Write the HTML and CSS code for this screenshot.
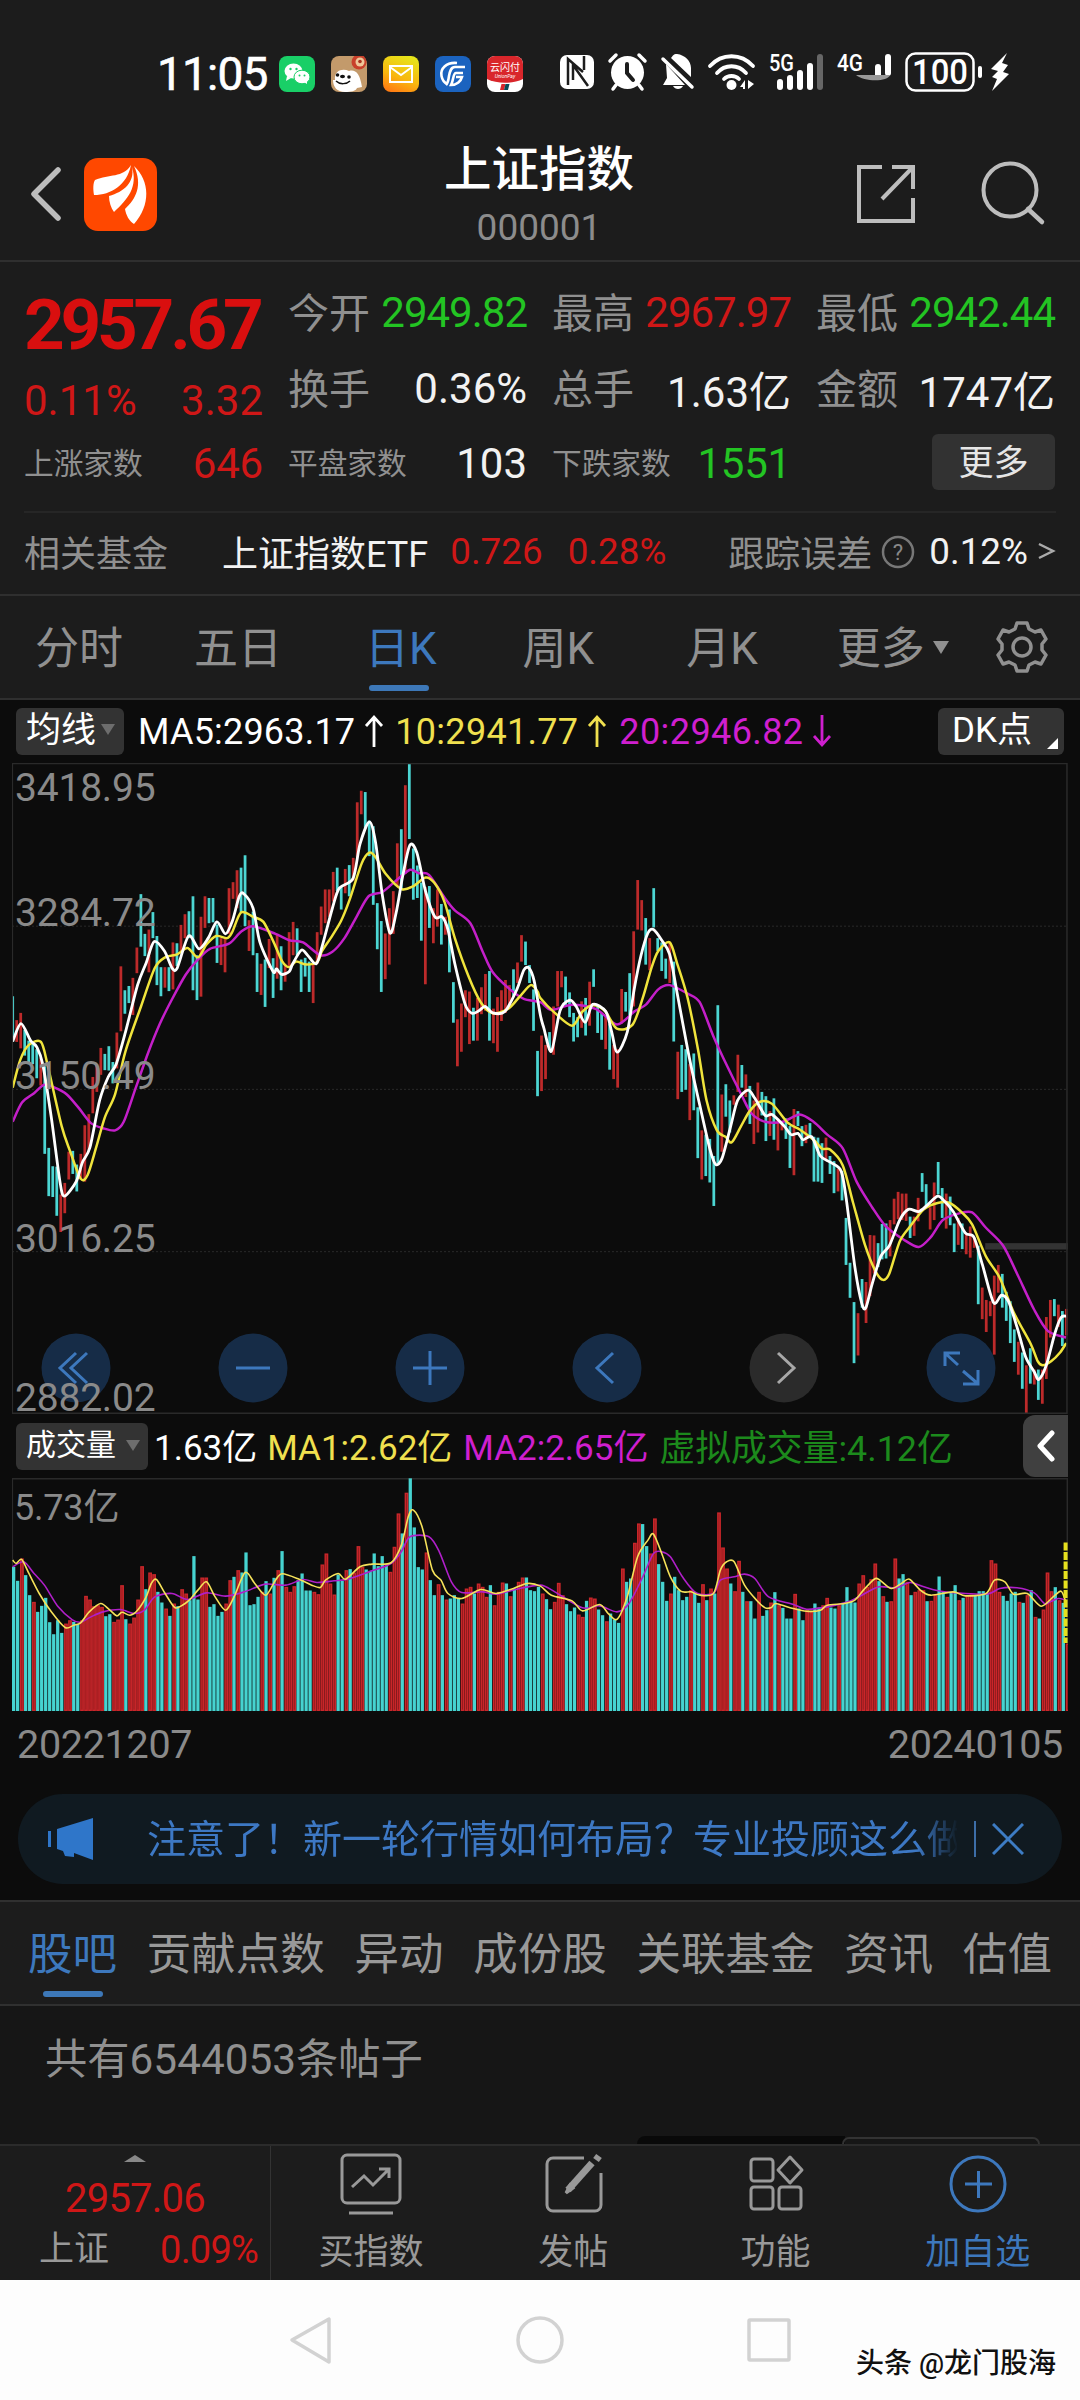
FILE: index.html
```html
<!DOCTYPE html>
<html lang="zh">
<head>
    <meta charset="UTF-8">
    <meta name="viewport" content="width=device-width, initial-scale=1.0">
    <title>上证指数 000001</title>
    <link rel="stylesheet" href="styles.css">
</head>
<body>
    <!-- 状态栏 -->
    <div class="status-bar">
        <span class="time">11:05</span>
        <div class="app-icons">
            <svg viewBox="0 0 36 36"><rect width="36" height="36" rx="8" fill="#19cf67"/><ellipse cx="14.5" cy="15" rx="9" ry="7.5" fill="#fff"/><path d="M8 20l-1 5 5-3z" fill="#fff"/><ellipse cx="23" cy="21" rx="8" ry="6.8" fill="#fff" stroke="#19cf67" stroke-width="1"/><path d="M25 26l3 2v-4z" fill="#fff"/><g fill="#19cf67"><circle cx="11.5" cy="13" r="1.2"/><circle cx="17.5" cy="13" r="1.2"/><circle cx="20.5" cy="19.5" r="1"/><circle cx="25.5" cy="19.5" r="1"/></g></svg>
            <svg viewBox="0 0 36 36"><rect width="36" height="36" rx="8" fill="#c39a6b"/><circle cx="28" cy="6" r="7.5" fill="#c8402b"/><circle cx="29" cy="6" r="4.5" fill="#eec79a"/><circle cx="29" cy="5.5" r="1.8" fill="#a8321f"/><path d="M4 24C3 14 12 12 18 15c6-2 11 2 13 16l-5 1c-1 3-6 4-12 4C6 36 2 31 2 24z" fill="#fff"/><circle cx="6.5" cy="19" r="1.8" fill="#111"/><circle cx="18" cy="21" r="1.8" fill="#111"/><ellipse cx="11.5" cy="20.5" rx="2.5" ry="1.8" fill="#111"/><path d="M5 25c4 4 11 3 14 0" fill="none" stroke="#111" stroke-width="1.5"/></svg>
            <svg viewBox="0 0 36 36"><defs><linearGradient id="mail" x1="0.7" y1="0" x2="0.3" y2="1"><stop offset="0" stop-color="#e6e51a"/><stop offset="0.6" stop-color="#f9b70f"/><stop offset="1" stop-color="#ff7d12"/></linearGradient></defs><rect width="36" height="36" rx="8" fill="url(#mail)"/><path d="M7 10h22v16H7zM7 11l11 8 11-8" fill="none" stroke="#fff" stroke-width="2"/></svg>
            <svg viewBox="0 0 36 36"><rect width="36" height="36" rx="8" fill="#1b63bf"/><g fill="none" stroke="#fff" stroke-width="2.6"><path d="M22 7C11 6 5 13 6.5 20c1 5 3 7 6 8"/><path d="M30 11H20c-4 0-5 4-6 9-.5 4-1 7-3 9"/><path d="M28 17h-7c-3 0-2 6-5 12 6 0 10-4 11-8h-6"/></g></svg>
            <svg viewBox="0 0 36 36"><rect width="36" height="36" rx="8" fill="#fff"/><path d="M0 23V8a8 8 0 018-8h20a8 8 0 018 8v15c-10 5-26 5-36 0z" fill="#d9262b"/><path d="M14.5 28h4l-1.5 6h-4z" fill="#d9262b"/><path d="M18.5 28h4l-1.5 6h-4z" fill="#0b4b57"/><text x="18" y="15" class="pay-text">云闪付</text><text x="18" y="22" class="pay-sub">UnionPay</text></svg>
        </div>
        <svg class="signals" viewBox="0 0 470 60">
            <g fill="#fff">
                <rect x="10" y="11" width="34" height="34" rx="7"/>
                <path d="M18 41V15l15 13M23 36V21l15 21M34 26V12" fill="none" stroke="#1c1c1c" stroke-width="2.5"/>
                <circle cx="77.5" cy="28.5" r="16.5"/>
                <path d="M60 17l6-6M95 17l-6-6M66 41l-3 4M89 41l3 4" stroke="#fff" stroke-width="3.5" stroke-linecap="round"/>
                <path d="M77 20v9l6 7" fill="none" stroke="#1c1c1c" stroke-width="4" stroke-linecap="round"/>
                <path d="M127 10c8 1 14 7 14 14v9L121 14c2-2 2-4 6-4zM116 20l19 21h-22l4-7zM123 42h10c-2 4-8 4-10 0z"/>
                <path d="M113 15l29 28" stroke="#fff" stroke-width="3.5" stroke-linecap="round"/>
                <circle cx="181.5" cy="41" r="5"/>
                <g fill="none" stroke="#fff" stroke-width="3.8" stroke-linecap="round"><path d="M160 22c12-13 31-13 43 0M167 29c8-9 21-9 29 0M174 35c4-4 11-4 15 0"/></g>
                <path d="M190 43l5-7v9h-2v-2zM198 36v9l6-5z"/>
                <rect x="227" y="35" width="6" height="11" rx="3"/>
                <rect x="237" y="31" width="6" height="15" rx="3"/>
                <rect x="247" y="26" width="6" height="20" rx="3"/>
                <rect x="257" y="19" width="6" height="27" rx="3"/>
                <rect x="267" y="10" width="6" height="36" rx="3" fill="#666"/>
                <rect x="325" y="20" width="6" height="14" rx="3"/>
                <rect x="335" y="10" width="6" height="22" rx="3"/>
                <path d="M306 31h34c-2 7-26 7-34 0z" fill="#999"/>
                <rect x="356.5" y="9.5" width="67" height="37" rx="9" fill="none" stroke="#fff" stroke-width="2.5"/>
                <rect x="428" y="22" width="4" height="12" rx="2"/>
                <path d="M457 9l-16 16 7 2-6 6 5 2-5 12 17-17-6-2 5-7-6-2z"/>
            </g>
            <text x="219" y="27" class="net" textLength="25" lengthAdjust="spacingAndGlyphs">5G</text>
            <text x="287" y="27" class="net" textLength="26" lengthAdjust="spacingAndGlyphs">4G</text>
            <text x="390" y="40" class="battery" textLength="56" lengthAdjust="spacingAndGlyphs">100</text>
        </svg>
    </div>

    <!-- 标题 -->
    <div class="header">
        <svg class="back" viewBox="0 0 32 56"><path d="M28 4L4 28l24 24" fill="none" stroke="#bdbdbd" stroke-width="5.5" stroke-linecap="round" stroke-linejoin="round"/></svg>
        <svg class="logo" viewBox="0 0 73 73"><rect width="73" height="73" rx="14" fill="#ff4800"/><g fill="#fff"><path d="M47 7C39 20 25 16 11 22c-2 3-2 9-1 15C27 37 43 27 47 7z"/><path d="M48 9c3 15-8 25-23 29 0 6 2 12 5 16C44 41 54 29 48 9z"/><path d="M50 8c9 19 2 33-9 43 1 6 4 12 9 15 17-19 16-43 0-58z"/></g></svg>
        <div class="title">
            <div class="name">上证指数</div>
            <div class="code">000001</div>
        </div>
        <svg class="share" viewBox="0 0 60 60"><path d="M26 3H3v54h54V34M36 3h21v22M57 3L26 35" fill="none" stroke="#bdbdbd" stroke-width="4"/></svg>
        <svg class="search" viewBox="0 0 66 66"><circle cx="30" cy="29" r="26.5" fill="none" stroke="#bdbdbd" stroke-width="4"/><path d="M48 48l14 13" stroke="#bdbdbd" stroke-width="4.5" stroke-linecap="round"/></svg>
    </div>

    <!-- 行情 -->
    <div class="quote">
        <div class="col first">
            <div class="price red">2957.67</div>
            <div class="row change red"><span>0.11%</span><span>3.32</span></div>
            <div class="row small"><label>上涨家数</label><span class="red">646</span></div>
        </div>
        <div class="col">
            <div class="row"><label>今开</label><span class="green">2949.82</span></div>
            <div class="row"><label>换手</label><span>0.36%</span></div>
            <div class="row small"><label>平盘家数</label><span>103</span></div>
        </div>
        <div class="col">
            <div class="row"><label>最高</label><span class="red">2967.97</span></div>
            <div class="row"><label>总手</label><span>1.63亿</span></div>
            <div class="row small"><label>下跌家数</label><span class="green">1551</span></div>
        </div>
        <div class="col">
            <div class="row"><label>最低</label><span class="green">2942.44</span></div>
            <div class="row"><label>金额</label><span>1747亿</span></div>
            <div class="row more"><button class="more-btn">更多</button></div>
        </div>
    </div>
    <div class="fund">
        <span class="gray">相关基金</span>
        <span class="etf">上证指数ETF</span>
        <span class="red nav">0.726</span>
        <span class="red rate">0.28%</span>
        <span class="gray track">跟踪误差</span>
        <svg class="help" viewBox="0 0 34 34"><circle cx="17" cy="17" r="15" fill="none" stroke="#777" stroke-width="2.5"/><text x="17" y="25">?</text></svg>
        <span class="err">0.12%</span>
        <svg class="arrow" viewBox="0 0 18 22"><path d="M1 4l14 7-14 7" fill="none" stroke="#aaa" stroke-width="2.5"/></svg>
    </div>

    <!-- 周期切换 -->
    <div class="tabs">
        <span class="tab first-tab">分时</span>
        <span class="tab">五日</span>
        <span class="tab active">日K</span>
        <span class="tab">周K</span>
        <span class="tab month">月K</span>
        <span class="tab others">更多<i class="down"></i></span>
        <svg class="gear" viewBox="0 0 54 54"><path d="M22 3h10l2 6 6 3 6-2 5 9-4 5v6l4 5-5 9-6-2-6 3-2 6H22l-2-6-6-3-6 2-5-9 4-5v-6l-4-5 5-9 6 2 6-3z" fill="none" stroke="#909090" stroke-width="3.5" stroke-linejoin="round"/><circle cx="27" cy="27" r="9" fill="none" stroke="#909090" stroke-width="3.5"/></svg>
    </div>

    <!-- K线 -->
    <div class="chart-area">
        <div class="legend">
            <span class="pill">均线<i class="down dim"></i></span>
            <span class="ma5">MA5:2963.17<svg class="dir" viewBox="0 0 20 34"><path d="M10 33V3M2 12l8-9 8 9" fill="none" stroke="currentColor" stroke-width="2.8"/></svg></span>
            <span class="ma10">10:2941.77<svg class="dir" viewBox="0 0 20 34"><path d="M10 33V3M2 12l8-9 8 9" fill="none" stroke="currentColor" stroke-width="2.8"/></svg></span>
            <span class="ma20">20:2946.82<svg class="dir" viewBox="0 0 20 34"><path d="M10 1v30M2 22l8 9 8-9" fill="none" stroke="currentColor" stroke-width="2.8"/></svg></span>
            <span class="pill dk">DK点<i class="corner"></i></span>
        </div>
        <div class="kline">
            <svg id="kline" viewBox="36 30 3062 1524" preserveAspectRatio="none"></svg>
            <div class="tools">
                <svg viewBox="0 0 70 70"><circle cx="35" cy="35" r="34.5"/><path d="M35 20L19 35l16 15M46 20L30 35l16 15"/></svg>
                <svg viewBox="0 0 70 70"><circle cx="35" cy="35" r="34.5"/><path d="M18 35h34"/></svg>
                <svg viewBox="0 0 70 70"><circle cx="35" cy="35" r="34.5"/><path d="M18 35h34M35 18v34"/></svg>
                <svg viewBox="0 0 70 70"><circle cx="35" cy="35" r="34.5"/><path d="M41 20L25 35l16 15"/></svg>
                <svg class="off" viewBox="0 0 70 70"><circle cx="35" cy="35" r="34.5"/><path d="M29 20l16 15-16 15"/></svg>
                <svg viewBox="0 0 70 70"><circle cx="35" cy="35" r="34.5"/><path d="M19 33V20h15M20 21l12 11M52 37v14H37M51 50L37 38"/></svg>
            </div>
            <span class="scale s1">3418.95</span>
            <span class="scale s2">3284.72</span>
            <span class="scale s3">3150.49</span>
            <span class="scale s4">3016.25</span>
            <span class="scale s5">2882.02</span>
        </div>
        <div class="legend vol-legend">
            <span class="pill">成交量<i class="down dim"></i></span>
            <span class="v0">1.63亿</span>
            <span class="v1">MA1:2.62亿</span>
            <span class="v2">MA2:2.65亿</span>
            <span class="v3">虚拟成交量:4.12亿</span>
            <span class="side"><svg viewBox="0 0 20 32"><path d="M16 3L4 16l12 13" fill="none" stroke="#fff" stroke-width="5" stroke-linecap="round" stroke-linejoin="round"/></svg></span>
        </div>
        <div class="volume">
            <svg id="volume" viewBox="36 204 3062 698" preserveAspectRatio="none"></svg>
            <span class="scale v-scale">5.73亿</span>
        </div>
        <div class="dates"><span>20221207</span><span>20240105</span></div>
        <div class="notice">
            <svg class="horn" viewBox="0 0 46 42"><path d="M1.5 13v16" stroke="#2f76c9" stroke-width="3"/><path d="M9 11L45 0v42l-19-7v4l-9-1-2-5-6-2z" fill="#2f76c9"/></svg>
            <div class="notice-text">注意了！新一轮行情如何布局？专业投顾这么做</div>
            <i class="bar"></i>
            <svg class="close" viewBox="0 0 32 32"><path d="M1 1l30 30M31 1L1 31" stroke="#3d7cc4" stroke-width="3"/></svg>
        </div>
    </div>

    <!-- 资讯栏 -->
    <div class="sections">
        <span class="active">股吧</span>
        <span>贡献点数</span>
        <span>异动</span>
        <span>成份股</span>
        <span>关联基金</span>
        <span>资讯</span>
        <span>估值</span>
    </div>
    <div class="posts">
        共有6544053条帖子
        <div class="switch"><i></i></div>
    </div>

    <!-- 底部 -->
    <div class="bottom-bar">
        <div class="index">
            <i class="up"></i>
            <div class="red num">2957.06</div>
            <div class="index-row"><span>上证</span><span class="red">0.09%</span></div>
        </div>
        <div class="action">
            <svg viewBox="0 0 62 62"><rect x="2" y="2" width="58" height="48" rx="5"/><path d="M12 34l12-11 9 9 15-15M39 16h10v9M9 60h44"/></svg>
            <span>买指数</span>
        </div>
        <div class="action">
            <svg viewBox="0 0 62 62"><path d="M42 5H11a6 6 0 00-6 6v41a6 6 0 006 6h42a6 6 0 006-6V20"/><path d="M26 37L50 10" stroke-width="7"/><path d="M24 40l4-8 3 3z" fill="#999"/><path d="M54 7l3-4" stroke-width="7"/></svg>
            <span>发帖</span>
        </div>
        <div class="action">
            <svg viewBox="0 0 62 62"><rect x="6" y="6" width="22" height="22" rx="3"/><rect x="6" y="34" width="22" height="22" rx="3"/><rect x="34" y="34" width="22" height="22" rx="3"/><path d="M45 4l12 13-12 13-12-13z" stroke-linejoin="round"/></svg>
            <span>功能</span>
        </div>
        <div class="action blue">
            <svg viewBox="0 0 62 62"><circle cx="31" cy="31" r="27"/><path d="M18 31h27M31.5 18v27"/></svg>
            <span>加自选</span>
        </div>
    </div>
    <div class="nav-bar">
        <svg viewBox="0 0 50 50"><path d="M43 4v43L6 25z" stroke-linejoin="round"/></svg>
        <svg viewBox="0 0 50 50"><circle cx="25" cy="25" r="22"/></svg>
        <svg viewBox="0 0 50 50"><rect x="5" y="5" width="40" height="40" rx="1"/></svg>
        <span class="watermark">头条 @龙门股海</span>
    </div>
    <script src="script.js"></script>
</body>
</html>
```

FILE: styles.css
```css
html, body {
    margin: 0;
    padding: 0;
    overflow: hidden;
}

body {
    width: 1080px;
    height: 2400px;
    display: flex;
    flex-direction: column;
    background: #1c1c1c;
    color: #f2f2f2;
    font-family: Roboto, "Noto Sans CJK SC", sans-serif;
}

* {
    box-sizing: border-box;
}

svg {
    display: block;
    flex: none;
}

span, label, .title, .price {
    white-space: nowrap;
}

.red {
    color: #cf1717;
}

.green {
    color: #23c423;
}

.gray {
    color: #909090;
}

/* 状态栏 */
.status-bar {
    height: 148px;
    padding-left: 157px;
    display: flex;
    align-items: center;
    flex: none;
}

.time {
    width: 122px;
    font-size: 46px;
    letter-spacing: -0.8px;
    color: #fff;
    -webkit-text-stroke: 0.6px #fff;
}

.app-icons {
    display: flex;
    gap: 16px;
    width: 271px;
}

.app-icons svg {
    width: 36px;
    height: 36px;
}

.pay-text {
    font-size: 10px;
    fill: #fff;
    text-anchor: middle;
}

.pay-sub {
    font-size: 5px;
    font-style: italic;
    fill: #fff;
    text-anchor: middle;
}

.signals {
    width: 470px;
    height: 60px;
}

.net {
    font-size: 24px;
    font-weight: 500;
    fill: #fff;
}

.battery {
    font-size: 35px;
    font-weight: 500;
    fill: #fff;
    text-anchor: middle;
}

/* 标题 */
.header {
    height: 114px;
    border-bottom: 2px solid #2f2f2f;
    display: flex;
    align-items: center;
    padding: 0 34px 20px 30px;
    flex: none;
}

.back {
    width: 32px;
    height: 56px;
    margin-right: 22px;
}

.logo {
    width: 73px;
    height: 73px;
}

.title {
    flex: 1;
    padding: 12px 0 0 65px;
    text-align: center;
}

.name {
    font-size: 47.5px;
    line-height: 56px;
    font-weight: 500;
    color: #fff;
}

.code {
    font-size: 37px;
    line-height: 60px;
    color: #8c8c8c;
}

.share {
    width: 60px;
    height: 60px;
    margin-right: 64px;
}

.search {
    width: 66px;
    height: 66px;
}

/* 行情 */
.quote {
    height: 251px;
    margin: 0 24px;
    padding-top: 12px;
    border-bottom: 2px solid #262626;
    display: grid;
    grid-template-columns: repeat(4, 239px);
    column-gap: 25px;
    flex: none;
}

.row {
    height: 76px;
    display: flex;
    align-items: center;
    justify-content: space-between;
    font-size: 42px;
}

.row label {
    padding-bottom: 4px;
    font-size: 41px;
    color: #909090;
}

.row .red, .row .green {
    letter-spacing: -1px;
}

.price {
    height: 100px;
    line-height: 102px;
    font-size: 71px;
    font-weight: 700;
    letter-spacing: -4.2px;
    color: #d90f0f;
}

.row.change {
    height: 52px;
}

.row.small {
    height: 74px;
}

.row.small label {
    font-size: 29.7px;
}

.row.small .red, .row.small .green {
    letter-spacing: -0.2px;
}

.row.more {
    height: 72px;
    justify-content: flex-end;
}

.more-btn {
    width: 123px;
    height: 56px;
    padding: 0 0 8px;
    border: none;
    border-radius: 6px;
    background: #323232;
    color: #e6e6e6;
    font: 35px Roboto, "Noto Sans CJK SC", sans-serif;
}

.fund {
    height: 83px;
    padding: 0 24px 6px;
    border-bottom: 2px solid #2f2f2f;
    display: flex;
    align-items: center;
    font-size: 36px;
    flex: none;
}

.etf {
    margin-left: 54px;
}

.fund .nav {
    margin: 0 25px 0 22px;
}

.nav, .rate, .err {
    font-size: 36.8px;
    padding-top: 2px;
}

.track {
    margin-left: auto;
}

.help {
    width: 34px;
    height: 34px;
    margin: 2px 14px 0 9px;
}

.help text {
    font-size: 22px;
    fill: #888;
    text-anchor: middle;
}

.arrow {
    width: 18px;
    height: 22px;
    margin-left: 10px;
}

/* 周期切换 */
.tabs {
    height: 104px;
    border-bottom: 2px solid #2f2f2f;
    padding: 0 31px 0 35px;
    display: flex;
    align-items: center;
    gap: 86px;
    font-size: 44px;
    color: #909090;
    flex: none;
}

.tab {
    height: 102px;
    line-height: 106px;
}

.first-tab {
    margin-right: -15px;
}

.tabs .active {
    margin-left: -3px;
}

.month {
    margin-left: 6px;
}

.others {
    margin: 0 -60px 0 -7px;
}

.active {
    color: #3d78bd;
    position: relative;
}

.active::after {
    content: "";
    position: absolute;
    left: 50%;
    bottom: 7px;
    width: 60px;
    height: 6px;
    margin-left: -32px;
    border-radius: 3px;
    background: #3d78b8;
}

.down {
    display: inline-block;
    border: 8px solid transparent;
    border-top: 13px solid #909090;
    border-bottom: none;
    margin-left: 8px;
    vertical-align: 10px;
}

.down.dim {
    border-width: 11px 7px 0;
    border-top-color: #6d6d6d;
    margin-left: 5px;
    vertical-align: 7px;
}

.gear {
    width: 54px;
    height: 54px;
    margin-left: auto;
}

/* K线 */
.chart-area {
    height: 1200px;
    background: #0c0c0c;
    padding: 0 12px;
    flex: none;
}

.legend {
    height: 63px;
    display: flex;
    align-items: center;
    padding-left: 4px;
    font-size: 36px;
}

.pill {
    width: 108px;
    height: 47px;
    line-height: 46px;
    padding-left: 10px;
    border-radius: 6px;
    background: #333;
    color: #fff;
    font-size: 35px;
}

.ma5 {
    margin-left: 14px;
    color: #fff;
    letter-spacing: 0.2px;
}

.ma10 {
    margin-left: 11px;
    color: #f0e04f;
    letter-spacing: 0.3px;
}

.ma20 {
    margin-left: 12px;
    color: #cf1fcf;
    letter-spacing: 0.4px;
}

.dir {
    display: inline-block;
    width: 20px;
    height: 34px;
    margin-left: 9px;
    vertical-align: -4px;
}

.dk {
    position: relative;
    width: 126px;
    margin-left: auto;
    margin-right: 4px;
    padding-left: 14px;
}

.corner {
    position: absolute;
    right: 6px;
    bottom: 6px;
    border-left: 11px solid transparent;
    border-bottom: 11px solid #fff;
}

.kline {
    position: relative;
    height: 651px;
}

.kline > svg, .volume > svg {
    width: 1056px;
    height: 100%;
}

.scale {
    position: absolute;
    left: 3px;
    font-size: 39px;
    line-height: 40px;
    letter-spacing: -0.2px;
    color: #8a8a8a;
}

.s1 { top: 5px; }
.s2 { top: 130px; }
.s3 { top: 293px; }
.s4 { top: 456px; }
.s5 { top: 615px; }

.tools {
    position: absolute;
    left: 29px;
    top: 570px;
    width: 955px;
    display: flex;
    justify-content: space-between;
}

.tools svg {
    width: 70px;
    height: 70px;
    fill: none;
    stroke: #3d78bd;
    stroke-width: 3;
}

.tools circle {
    fill: rgba(30, 66, 112, 0.6);
    stroke: none;
}

.tools .off {
    stroke: #a8a8a8;
}

.tools .off circle {
    fill: #2b2b2b;
}

.vol-legend {
    height: 64px;
    font-size: 35px;
}

.vol-legend > span {
    margin-bottom: 3px;
}

.vol-legend .pill {
    width: 132px;
    margin-bottom: 0;
    font-size: 30px;
    line-height: 44px;
}

.vol-legend .down {
    margin-left: 10px;
    vertical-align: 4px;
}

.v0 {
    margin-left: 6px;
    color: #fff;
}

.v1 {
    margin-left: 10px;
    color: #f0e04f;
}

.v2 {
    margin-left: 11px;
    color: #cf1fcf;
}

.v3 {
    margin-left: 11px;
    font-size: 35.8px;
    color: #1c8a1c;
}

.vol-legend .side {
    width: 45px;
    height: 62px;
    margin-left: auto;
    margin-bottom: 0;
    border-radius: 12px 0 0 12px;
    background: #404040;
    display: flex;
    align-items: center;
    justify-content: center;
}

.side svg {
    width: 20px;
    height: 32px;
}

.volume {
    position: relative;
    height: 233px;
}

.v-scale {
    left: 2px;
    top: 10px;
    font-size: 36px;
}

.dates {
    height: 83px;
    padding: 0 5px 17px 5px;
    display: flex;
    align-items: center;
    justify-content: space-between;
    font-size: 39.5px;
    color: #8a8a8a;
    letter-spacing: -0.3px;
}

.notice {
    height: 90px;
    margin: 0 6px;
    padding: 0 38px 0 30px;
    border-radius: 45px;
    background: #101a21;
    display: flex;
    align-items: center;
}

.horn {
    width: 46px;
    height: 42px;
}

.notice-text {
    width: 810px;
    margin-left: 53px;
    padding-bottom: 7px;
    overflow: hidden;
    white-space: nowrap;
    font-size: 39px;
    color: #3d78c4;
    -webkit-mask-image: linear-gradient(to right, #000 770px, transparent 812px);
    mask-image: linear-gradient(to right, #000 770px, transparent 812px);
}

.bar {
    width: 2px;
    height: 36px;
    margin: 0 16px 0 17px;
    background: #3d6ea8;
}

.close {
    width: 32px;
    height: 32px;
}

/* 资讯栏 */
.sections {
    height: 106px;
    border-top: 2px solid #303030;
    border-bottom: 2px solid #303030;
    padding: 0 28px;
    display: flex;
    justify-content: space-between;
    font-size: 44.5px;
    line-height: 107px;
    color: #999;
    flex: none;
}

.sections .active {
    height: 102px;
}

.sections .active::after {
    margin-left: -30px;
    bottom: 7px;
}

.posts {
    position: relative;
    height: 138px;
    padding-left: 45px;
    background: #161616;
    font-size: 42.3px;
    line-height: 108px;
    color: #909090;
    flex: none;
}

.switch {
    position: absolute;
    left: 637px;
    bottom: 0;
    width: 403px;
    height: 8px;
    border-radius: 8px 8px 0 0;
    background: linear-gradient(to right, #090909 208px, transparent 208px);
}

.switch i {
    position: absolute;
    right: 0;
    bottom: 0;
    width: 198px;
    height: 7px;
    border: 2px solid #333;
    border-bottom: none;
    border-radius: 8px 8px 0 0;
}

/* 底部 */
.bottom-bar {
    height: 136px;
    border-top: 2px solid #2b2b2b;
    display: flex;
    flex: none;
}

.index {
    width: 271px;
    border-right: 1px solid #333;
    display: flex;
    flex-direction: column;
    align-items: center;
    font-size: 35px;
}

.up {
    margin-top: 9px;
    border: 11px solid transparent;
    border-bottom: 7px solid #888;
    border-top: none;
}

.num {
    margin-top: 13px;
    font-size: 40px;
    line-height: 47px;
    letter-spacing: -0.8px;
}

.index-row {
    width: 219px;
    align-self: flex-start;
    margin-left: 39px;
    display: flex;
    justify-content: space-between;
    line-height: 56px;
    color: #999;
}

.index-row .red {
    font-size: 38px;
    letter-spacing: -0.8px;
}

.action {
    flex: 1;
    display: flex;
    flex-direction: column;
    align-items: center;
    padding: 7px 2px 0 0;
    font-size: 35px;
    line-height: 75px;
    color: #999;
}

.action svg {
    width: 62px;
    height: 62px;
    fill: none;
    stroke: #999;
    stroke-width: 3;
}

.action.blue {
    color: #3d78bd;
}

.action.blue svg {
    stroke: #3d78bd;
}

.nav-bar {
    position: relative;
    flex: 1;
    background: #fdfdfd;
    display: flex;
    justify-content: center;
    align-items: center;
    gap: 179px;
}

.nav-bar svg {
    width: 50px;
    height: 50px;
    fill: none;
    stroke: #d2d2d2;
    stroke-width: 3.5;
}

.watermark {
    position: absolute;
    right: 24px;
    bottom: 16px;
    font-size: 28px;
    line-height: 40px;
    font-weight: 500;
    color: #111;
    text-shadow: 1px 1px 1px #fff;
}
```

FILE: script.js
```javascript
const NS = 'http://www.w3.org/2000/svg';
const STEP = 11.617;
const CYAN = '#46d3d0';
const RED = '#c9262a';

// 每根K线: 涨跌, 最高, 最低
const candles = `c576-683 r632-683 r615-698 c655-715 c680-735 c688-735 c700-768 r720-785 c740-945 c931-1044 c974-1046 c975-1090 r1040-1128 r1013-1084 r940-1005 c938-992 c970-1033 r945-1005 r878-1010 r852-935
r765-850 r735-800 r697-760 c711-749 c693-750 c730-780 r661-745 r506-658 c562-617 c552-592 r533-620 r462-522 c337-460 c430-482 r420-520 c379-440 c435-550 c508-576 r508-556 c508-564
r450-560 c452-505 r409-470 r384-440 c377-440 c342-562 c480-585 r390-577 r342-416 c346-405 c346-403 c408-498 r440-503 r440-520 r323-430 r309-348 r281-370 c275-380 c246-412 r398-470
c378-480 c475-566 r500-573 c490-601 r442-510 c487-580 r430-535 c459-562 r500-542 r426-505 r402-480 c417-480 c490-566 c486-530 c495-566 r495-592 r426-500 r366-432 r326-405 r326-390
r285-354 c275-330 c318-373 r278-335 c269-342 r252-305 r122-250 r95-150 c98-182 c165-248 c178-362 c358-466 c400-566 r429-536 r370-502 r330-430 r218-320 c185-325 r82-290 c30-208
c230-350 c270-346 c310-446 r320-548 c318-416 r370-452 r326-413 c360-455 r390-432 c373-520 c543-638 r630-740 r593-706 r562-625 r565-688 c603-680 r580-680 r555-618 r524-610 c517-680
r605-686 r578-706 r562-634 r538-615 r550-595 c513-575 r497-545 r433-495 c448-503 c503-545 c560-657 c704-810 r668-798 r690-770 c660-700 r600-713 r517-600 r517-555 c530-600 c567-625
c615-682 c625-672 r588-650 c580-668 r542-645 c513-554 c600-662 c615-678 r625-700 c640-748 r690-770 r700-790 r559-640 c566-612 c522-620 r424-600 r304-420 r351-422 c393-502 r440-515
c323-415 c440-470 c450-517 c488-535 r450-545 c495-682 r706-817 c690-800 c700-795 r735-866 c710-843 c836-955 r890-1005 c900-997 c910-1012 c950-1067 c597-968 r806-940 c782-858 c820-895
r808-830 r713-800 c737-790 r759-812 c786-875 r820-922 r778-895 c800-855 c810-915 r845-903 c815-912 r862-937 r868-890 c862-910 c880-978 r840-995 c845-880 c880-927 r877-920 c873-905
c905-1010 c907-1010 c920-1013 r907-960 c950-992 c962-1037 r980-1033 c985-1054 c1095-1205 c1200-1282 c1292-1435 r1318-1417 c1238-1305 r1245-1341 r1135-1278 r1136-1225 c1154-1210 c1109-1192 c1108-1190 r1100-1185
r1050-1110 r1034-1098 r1038-1100 r1038-1102 c1092-1142 r1092-1137 r1048-1103 c990-1034 c1016-1070 r1070-1122 r1012-1100 c964-1040 c1025-1095 r1038-1120 c1045-1112 c1108-1175 r1095-1158 c1108-1168 r1130-1180 r1115-1188
r1140-1165 c1160-1297 r1258-1332 r1287-1362 r1290-1325 r1230-1415 r1205-1270 c1226-1305 c1268-1336 c1290-1388 c1356-1432 r1385-1462 c1410-1495 r1440-1553 c1400-1483 r1450-1485 c1450-1521 r1450-1530 r1327-1472 r1287-1375
c1285-1325 r1298-1350 c1313-1395 r1308-1370`.split(/\s+/);

// 成交量柱: 涨跌, 柱顶
const bars = `c470 c512 r445 c495 c555 r575 c605 c587 c563 c636 c672 c630 c668 r640 r630 c635 c642 r630 r557 r568
r588 r585 r590 c618 c612 r635 r628 r525 c627 r640 r622 r568 r468 c537 r487 r492 c545 c577 r595 c617
r580 c588 r537 r550 c570 c438 c568 r502 r502 c590 c582 c617 c605 r580 r510 c500 r480 c487 c427 c585
c582 c560 r545 c513 r550 c503 r480 c423 r530 r545 r528 c510 c490 c541 c541 r545 r552 r463 r430 r520
r553 c493 c512 r480 c477 r487 r408 r470 c478 c482 c430 c468 c438 c467 r485 r410 r310 c370 r248 c205
c352 c471 c478 r427 c510 c555 r522 c555 r568 c565 c555 c565 r580 r535 r530 c550 r520 r530 r560 c525
r585 r545 r517 c520 r558 c535 r515 r502 c502 c540 c543 c530 r550 c567 c597 r575 r518 r555 c582 c603
c592 r613 r620 c572 r562 r565 c598 c615 r633 c610 c628 c638 r475 c515 c505 r398 r340 c342 c408 r430
r325 c462 c515 c572 r550 c500 c540 c570 c560 r540 c545 c578 r522 c570 r535 c550 r307 r412 r475 c520
r543 r452 c545 r573 c573 c625 r545 c617 c600 r577 c546 r585 c593 c625 c625 r551 c595 c630 r600 r605
c580 c592 r585 r563 c592 c595 r585 c578 c531 c572 c577 r520 r495 r530 r507 r460 c513 r558 c575 r573
r445 c505 c492 r515 c555 r545 r540 r540 c573 r572 r553 c499 c545 r560 c545 c525 r570 c563 r555 r553
c555 c543 c543 c550 r450 r460 r545 c557 c572 c550 c545 r575 c578 r555 c540 r620 c625 r598 r487 r543
c531 r570 c578 r700`.split(/\s+/);

const ma5 = '38,682 62,640 90,680 108,695 125,735 150,860 175,1010 188,1044 222,1010 240,965 262,930 290,820 315,765 338,735 365,660 400,550 425,498 448,448 478,470 500,510 515,510 548,435 578,465 605,440 630,402 655,430 675,400 695,342 708,336 735,370 755,450 793,518 803,512 818,525 840,518 850,500 875,468 893,480 918,500 935,460 965,370 985,323 1025,300 1045,220 1072,168 1090,215 1110,340 1132,428 1150,380 1170,290 1190,222 1210,240 1235,330 1262,390 1283,390 1300,420 1320,500 1350,595 1370,616 1390,610 1408,600 1430,615 1465,612 1500,560 1520,515 1535,510 1550,540 1568,620 1578,650 1600,705 1625,610 1653,585 1672,600 1698,637 1720,595 1758,612 1775,660 1791,707 1820,660 1840,560 1860,480 1880,428 1896,420 1920,445 1943,478 1965,570 2000,720 2030,830 2060,935 2077,970 2095,955 2120,880 2140,820 2170,796 2190,815 2220,855 2240,853 2275,880 2295,900 2315,897 2330,912 2355,905 2380,950 2410,965 2440,985 2455,1050 2480,1210 2500,1295 2512,1305 2530,1250 2555,1185 2580,1160 2610,1100 2635,1075 2665,1080 2690,1065 2720,1044 2740,1056 2765,1080 2800,1130 2825,1140 2850,1205 2882,1293 2905,1276 2925,1290 2950,1350 2975,1420 3000,1455 3013,1473 3035,1440 3060,1365 3078,1328 3093,1325';
const ma10 = '38,790 60,725 85,690 120,683 140,740 180,880 205,940 235,1003 255,995 280,930 305,860 335,805 365,705 410,600 450,510 480,485 515,478 545,463 575,485 600,455 628,435 660,440 675,425 700,380 735,390 765,402 795,450 820,495 840,508 860,495 890,502 922,495 935,470 960,440 990,400 1015,350 1050,265 1072,240 1090,250 1120,290 1165,325 1200,318 1235,298 1260,310 1290,355 1320,440 1360,530 1395,590 1430,616 1475,605 1510,575 1540,550 1560,565 1568,580 1610,615 1660,645 1690,612 1720,597 1755,610 1790,652 1835,643 1865,580 1890,510 1910,470 1943,450 1965,500 1995,580 2025,700 2050,820 2080,890 2105,905 2123,918 2150,880 2175,845 2205,823 2240,828 2285,872 2320,888 2360,912 2385,933 2408,935 2445,972 2475,1060 2510,1160 2540,1220 2562,1240 2580,1225 2610,1150 2640,1115 2680,1075 2720,1060 2755,1060 2790,1082 2820,1110 2860,1185 2900,1235 2940,1315 2990,1390 3010,1430 3025,1440 3050,1430 3075,1410 3093,1388';
const ma20 = '38,870 65,825 100,803 130,783 160,790 195,806 230,838 265,873 300,885 335,890 360,870 395,790 430,710 465,640 500,583 540,525 575,490 610,465 665,453 700,425 735,412 800,430 840,445 880,450 930,480 965,472 1000,440 1035,390 1070,342 1110,332 1150,305 1190,280 1215,288 1245,292 1290,345 1320,375 1365,405 1400,470 1430,520 1480,560 1520,582 1568,590 1600,608 1660,596 1730,606 1790,642 1840,612 1875,595 1910,560 1943,550 1995,570 2030,590 2070,670 2110,740 2150,805 2180,850 2220,870 2270,870 2320,853 2360,870 2400,900 2445,932 2485,1010 2530,1070 2570,1115 2620,1145 2665,1163 2700,1140 2735,1100 2780,1085 2820,1082 2860,1118 2910,1160 2950,1225 3000,1310 3040,1360 3093,1375';
const vma1 = '38,450 48,460 64,448 85,490 115,550 150,605 190,652 215,645 235,638 260,605 293,580 320,600 340,617 355,606 378,615 400,600 425,560 440,520 455,508 480,550 508,592 530,585 550,570 575,540 600,515 625,560 655,600 680,560 712,487 740,520 772,555 800,510 820,491 870,508 905,525 930,532 945,510 982,490 1003,507 1045,470 1080,462 1135,458 1165,405 1185,320 1200,300 1225,350 1255,480 1280,510 1300,550 1340,565 1395,538 1440,550 1490,535 1530,520 1568,528 1600,555 1660,572 1690,602 1740,583 1765,610 1791,627 1820,560 1850,440 1880,390 1896,372 1920,430 1945,500 1975,543 2005,545 2030,555 2070,550 2090,480 2108,455 2130,455 2160,525 2195,570 2220,593 2238,592 2250,580 2290,592 2340,603 2380,600 2400,585 2450,580 2480,570 2505,540 2535,508 2550,508 2585,535 2615,520 2638,507 2670,540 2700,555 2765,545 2800,557 2860,550 2885,510 2915,515 2940,552 2980,550 3020,588 3055,560 3078,543 3090,570';
const vma2 = '38,470 70,455 100,490 130,525 170,590 210,628 235,636 265,620 300,605 350,598 390,610 420,600 450,560 500,550 545,568 600,548 655,558 710,545 770,522 830,525 880,508 920,517 970,512 1010,507 1080,482 1135,460 1165,425 1190,380 1245,380 1275,425 1310,515 1340,547 1400,545 1440,552 1500,537 1568,525 1610,545 1690,593 1740,587 1790,605 1825,580 1865,500 1896,430 1920,425 1945,440 1980,500 2020,548 2070,550 2090,510 2130,500 2160,492 2190,505 2230,560 2300,582 2340,597 2400,590 2460,575 2500,555 2550,530 2600,533 2640,517 2680,530 2740,545 2860,552 2900,535 2950,533 3000,548 3030,580 3050,573 3070,565 3093,570';

function add(svg, tag, attrs) {
    const el = document.createElementNS(NS, tag);
    for (const k in attrs) el.setAttribute(k, attrs[k]);
    svg.appendChild(el);
}

// 把折线点连成平滑曲线
function smooth(points) {
    const p = points.split(' ').map(s => s.split(',').map(Number));
    let d = `M${p[0]}`;
    for (let i = 0; i < p.length - 1; i++) {
        const a = p[i - 1] || p[i], b = p[i], c = p[i + 1], e = p[i + 2] || c;
        d += `C${b[0] + (c[0] - a[0]) / 7},${b[1] + (c[1] - a[1]) / 7} ${c[0] - (e[0] - b[0]) / 7},${c[1] - (e[1] - b[1]) / 7} ${c}`;
    }
    return d;
}

function line(svg, points, color, width) {
    add(svg, 'path', { d: smooth(points), fill: 'none', stroke: color, 'stroke-width': width, 'vector-effect': 'non-scaling-stroke' });
}

const kline = document.getElementById('kline');
for (const y of [412, 794, 1174]) {
    add(kline, 'path', { d: `M36 ${y}H3098`, stroke: '#2a2a2a', 'stroke-width': 1, 'stroke-dasharray': '2 2', 'vector-effect': 'non-scaling-stroke' });
}
add(kline, 'rect', { x: 2858, y: 1154, width: 240, height: 15, fill: '#333' });
candles.forEach((s, i) => {
    const [top, bottom] = s.slice(1).split('-').map(Number);
    add(kline, 'rect', { x: 34 + i * STEP, y: top, width: 8, height: bottom - top, fill: s[0] === 'c' ? '#4cd6d3' : '#bd2a2a' });
});
line(kline, ma20, '#c41fc9', 2.5);
line(kline, ma10, '#f0e43c', 2.5);
line(kline, ma5, '#fff', 2.8);
add(kline, 'rect', { x: 37, y: 31, width: 3058, height: 1521, fill: 'none', stroke: '#2a2a2a', 'stroke-width': 1.5, 'vector-effect': 'non-scaling-stroke' });

const volume = document.getElementById('volume');
add(volume, 'path', { d: 'M37 902V206H3096V902', fill: 'none', stroke: '#2a2a2a', 'stroke-width': 1.5, 'vector-effect': 'non-scaling-stroke' });
bars.forEach((s, i) => {
    const top = Number(s.slice(1));
    const cyan = s[0] === 'c';
    add(volume, 'rect', { x: 36 + i * STEP, y: top, width: cyan ? 9.5 : 11, height: 902 - top, fill: cyan ? CYAN : RED });
    if (!cyan) {
        add(volume, 'rect', { x: 40 + i * STEP, y: top + 4, width: 2.5, height: 894 - top, fill: '#8f1a1c' });
    }
});
line(volume, vma2, '#b01fc9', 1.6);
line(volume, vma1, '#f6e25a', 1.6);
// 虚拟成交量
add(volume, 'path', { d: 'M3091 397V698', stroke: '#e6e01e', 'stroke-width': 4, 'stroke-dasharray': '8 1.5', 'vector-effect': 'non-scaling-stroke' });
```
